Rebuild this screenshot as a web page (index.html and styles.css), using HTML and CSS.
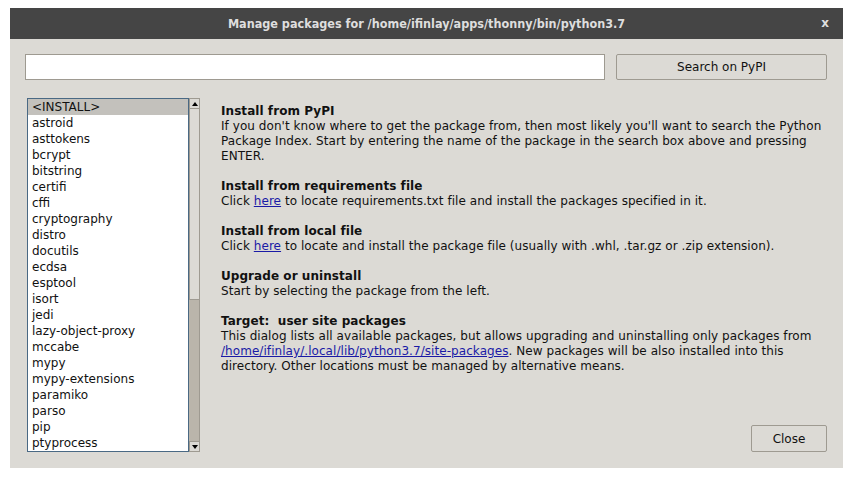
FILE: index.html
```html
<!DOCTYPE html>
<html lang="en">
<head>
  <meta charset="UTF-8" />
  <title>Manage packages</title>
  <link rel="stylesheet" href="styles.css">
</head>
<body>
  <div class="dialog">
    <div class="titlebar">
      <span class="title">Manage packages for /home/ifinlay/apps/thonny/bin/python3.7</span>
      <span class="close-x">x</span>
    </div>

    <div class="content">
      <div class="search-row">
        <input type="text" class="search-entry" />
        <button class="btn search-btn">Search on PyPI</button>
      </div>

      <div class="main">
        <div class="list-wrap">
          <ul class="pkg-list" id="pkgList"></ul>
          <div class="scrollbar">
            <div class="arrow up"><span></span></div>
            <div class="thumb"></div>
            <div class="trough"></div>
            <div class="arrow down"><span></span></div>
          </div>
        </div>

        <div class="info">
          <div class="info-text">
            <p>
              <b>Install from PyPI</b><br>
              If you don't know where to get the package from, then most likely you'll want to search the Python<br>
              Package Index. Start by entering the name of the package in the search box above and pressing<br>
              ENTER.
            </p>
            <p>
              <b>Install from requirements file</b><br>
              Click <a href="#">here</a> to locate requirements.txt file and install the packages specified in it.
            </p>
            <p>
              <b>Install from local file</b><br>
              Click <a href="#">here</a> to locate and install the package file (usually with .whl, .tar.gz or .zip extension).
            </p>
            <p>
              <b>Upgrade or uninstall</b><br>
              Start by selecting the package from the left.
            </p>
            <p>
              <b>Target:&nbsp; user site packages</b><br>
              This dialog lists all available packages, but allows upgrading and uninstalling only packages from<br>
              <a href="#">/home/ifinlay/.local/lib/python3.7/site-packages</a>. New packages will be also installed into this<br>
              directory. Other locations must be managed by alternative means.
            </p>
          </div>
          <button class="btn close-btn">Close</button>
        </div>
      </div>
    </div>
  </div>

  <script>
    const packages = [
      "<INSTALL>", "astroid", "asttokens", "bcrypt", "bitstring", "certifi",
      "cffi", "cryptography", "distro", "docutils", "ecdsa", "esptool",
      "isort", "jedi", "lazy-object-proxy", "mccabe", "mypy",
      "mypy-extensions", "paramiko", "parso", "pip", "ptyprocess"
    ];
    const list = document.getElementById("pkgList");
    packages.forEach((name, i) => {
      const li = document.createElement("li");
      li.textContent = name;
      if (i === 0) li.classList.add("selected");
      list.appendChild(li);
    });
  </script>
</body>
</html>
```

FILE: styles.css
```css
body {
  margin: 0;
  background: #fff;
  font-family: "DejaVu Sans", sans-serif;
  font-size: 12px;
  color: #111;
}
.dialog {
  margin: 8px 0 0 10px;
  width: 833px;
  height: 460px;
  background: #dcdad5;
  display: flex;
  flex-direction: column;
}
.titlebar {
  height: 32px;
  background: #454545;
  display: flex;
  align-items: center;
  justify-content: center;
  position: relative;
}
.title {
  font-family: "DejaVu Sans Condensed", sans-serif;
  font-weight: bold;
  font-size: 12.5px;
  color: #dedede;
}
.close-x {
  position: absolute;
  right: 14px;
  top: 8px;
  color: #dedede;
  font-weight: bold;
  font-size: 12px;
}
.content {
  flex: 1;
  padding: 15px 16px 16px 15px;
  display: flex;
  flex-direction: column;
}
.search-row {
  display: flex;
  gap: 11px;
  height: 26px;
}
.search-entry {
  flex: 1;
  margin: 0;
  padding: 0 4px;
  border: 1px solid #9e9a91;
  background: #fff;
  box-sizing: border-box;
  height: 26px;
}
.btn {
  margin: 0;
  font-family: "DejaVu Sans", sans-serif;
  font-size: 12px;
  color: #111;
  background: #dcdad5;
  border: 1px solid #9e9a91;
  border-radius: 2px;
  box-sizing: border-box;
  cursor: pointer;
}
.search-btn {
  width: 211px;
  height: 26px;
}
.main {
  flex: 1;
  display: flex;
  margin-top: 18px;
  min-height: 0;
}
.list-wrap {
  display: flex;
  margin-left: 2px;
}
.pkg-list {
  list-style: none;
  margin: 0;
  padding: 0;
  width: 162px;
  box-sizing: border-box;
  border: 1px solid #4a6984;
  background: #fff;
  overflow: hidden;
}
.pkg-list li {
  height: 16px;
  line-height: 17px;
  padding-left: 4px;
  white-space: nowrap;
}
.pkg-list li.selected {
  background: #c3c1bc;
}
.scrollbar {
  width: 11px;
  display: flex;
  flex-direction: column;
  background: #bab5ab;
}
.arrow {
  height: 11px;
  box-sizing: border-box;
  border: 1px solid #9e9a91;
  background: #dcdad5;
  display: flex;
  align-items: center;
  justify-content: center;
}
.arrow span {
  width: 0;
  height: 0;
  border-left: 3px solid transparent;
  border-right: 3px solid transparent;
}
.arrow.up span {
  border-bottom: 4px solid #000;
}
.arrow.down span {
  border-top: 4px solid #000;
}
.thumb {
  height: 191px;
  box-sizing: border-box;
  border: 1px solid #9e9a91;
  border-top: none;
  background: #dcdad5;
}
.trough {
  flex: 1;
  border-right: 1px solid #9e9a91;
}
.info {
  flex: 1;
  display: flex;
  flex-direction: column;
  margin-left: 21px;
}
.info-text {
  flex: 1;
  padding-top: 6px;
  line-height: 15px;
  letter-spacing: 0.06px;
  white-space: nowrap;
}
.info-text p {
  margin: 0 0 15px 0;
}
.info-text a {
  color: #1a1aa6;
}
.close-btn {
  align-self: flex-end;
  width: 76px;
  height: 27px;
}
```
